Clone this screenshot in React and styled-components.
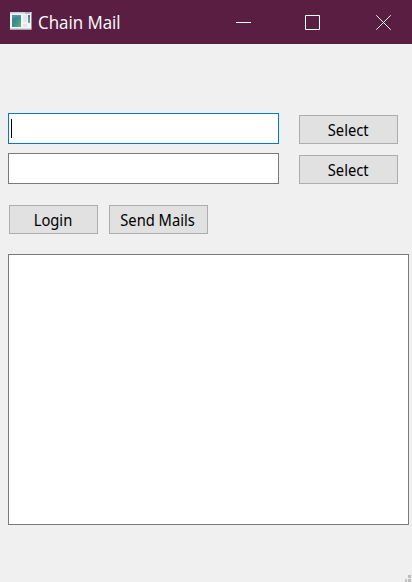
import React from "react";
import styled, { createGlobalStyle } from "styled-components";

const GlobalStyle = createGlobalStyle`
  * { box-sizing: border-box; }
  body { margin: 0; background: #f0f0f0; overflow: hidden; }
`;

const Window = styled.main`
  width: 412px;
  height: 582px;
  display: flex;
  flex-direction: column;
  background: #f0f0f0;
  font-family: "Noto Sans", "Open Sans", sans-serif;
  color: #000;
`;

const TitleBar = styled.header`
  height: 44px;
  flex: none;
  display: flex;
  align-items: center;
  padding: 0 21px 0 10px;
  background: #591e41;
`;

const Title = styled.h1`
  flex: 1;
  margin: 0 0 0 6px;
  color: #fff;
  font: 400 18px/24px "Open Sans", sans-serif;
  transform: scaleX(0.94);
  transform-origin: left center;
  white-space: nowrap;
`;

const Controls = styled.div`
  display: flex;
  align-items: center;
`;

const ControlIcon = styled.svg`
  display: block;
  width: 15px;
  height: 15px;
  margin-left: ${({ $gap }) => $gap}px;
  fill: none;
  stroke: #fff;
`;

const Content = styled.div`
  flex: 1;
  display: flex;
  flex-direction: column;
  padding: 69px 3px 0 8px;
`;

const Fields = styled.div`
  display: grid;
  row-gap: 9px;
`;

const FieldRow = styled.div`
  display: grid;
  grid-template-columns: 271px 99px;
  column-gap: 20px;
  align-items: end;
`;

const Field = styled.div`
  height: 31px;
  padding: 5px 2px;
  border: 1px solid ${({ $focused }) => ($focused ? "#0078d7" : "#7a7a7a")};
  background: #fff;
`;

const Caret = styled.div`
  width: 1px;
  height: 19px;
  background: #000;
`;

const ButtonFrame = styled.button`
  width: ${({ $width }) => $width}px;
  height: 29px;
  padding: 1px 1px 0 0;
  display: flex;
  align-items: center;
  justify-content: center;
  border: 1px solid #adadad;
  border-radius: 0;
  background: #e1e1e1;
  color: #000;
  font: 400 16px/22px "Noto Sans", sans-serif;
`;

const ButtonLabel = styled.span`
  display: block;
  flex: none;
  white-space: nowrap;
  transform: scaleX(0.92);
`;

const Button = ({ width, children }) => (
  <ButtonFrame type="button" $width={width}>
    <ButtonLabel>{children}</ButtonLabel>
  </ButtonFrame>
);

const Actions = styled.div`
  display: flex;
  gap: 11px;
  margin: 21px 0 20px 1px;
`;

const Log = styled.div`
  height: 271px;
  border: 1px solid #7a7a7a;
  background: #fff;
`;

const GripBar = styled.footer`
  display: flex;
  justify-content: flex-end;
  height: 7px;
  padding-right: 1px;
`;

const Grip = styled.svg`
  display: block;
`;

const AppIconSvg = styled.svg`
  display: block;
  margin-bottom: 2px;
`;

const AppIcon = () => (
  <AppIconSvg width="22" height="18" viewBox="0 0 22 18">
    <defs>
      <linearGradient id="pane" x1="0" y1="0" x2="1" y2="1">
        <stop offset="0" stopColor="#397aa0" />
        <stop offset="0.55" stopColor="#3f928b" />
        <stop offset="1" stopColor="#62b477" />
      </linearGradient>
      <linearGradient id="side" x1="0" y1="0" x2="0" y2="1">
        <stop offset="0" stopColor="#3e78a8" />
        <stop offset="1" stopColor="#65b587" />
      </linearGradient>
    </defs>
    <path fill="#f3f5f6" d="M0 0h21.5v17.5H0z" />
    <path fill="#c6d0d8" d="M0 0h21.5v1.5H0z" />
    <path fill="#8398ac" d="M15 .5h5v1h-5z" />
    <path fill="url(#pane)" d="M2 3h9v12H2z" />
    <path fill="#6ba7ad" opacity=".55" d="M2 7Q7 3 11 5V3H2z" />
    <path fill="#e4e7e7" d="M13 3h4v7h-4zM13 12h4v3h-4z" />
    <path fill="url(#side)" d="M18 3h2v8h-2z" />
    <path fill="#b8b5b8" d="M0 16.5h21.5v1H0z" />
  </AppIconSvg>
);

export default function App() {
  return (
    <>
      <GlobalStyle />
      <Window>
        <TitleBar>
          <AppIcon />
          <Title>Chain Mail</Title>
          <Controls>
            <ControlIcon $gap={0}><path d="M0 7.5h15" /></ControlIcon>
            <ControlIcon $gap={54}><path d="M.5.5h14v14H.5z" /></ControlIcon>
            <ControlIcon $gap={56}><path d="M.3.3l14.4 14.4M14.7.3L.3 14.7" /></ControlIcon>
          </Controls>
        </TitleBar>
        <Content>
          <Fields>
            <FieldRow>
              <Field $focused><Caret /></Field>
              <Button width={99}>Select</Button>
            </FieldRow>
            <FieldRow>
              <Field />
              <Button width={99}>Select</Button>
            </FieldRow>
          </Fields>
          <Actions>
            <Button width={89}>Login</Button>
            <Button width={99}>Send Mails</Button>
          </Actions>
          <Log />
        </Content>
        <GripBar>
          <Grip width="6" height="7" fill="#bfbfbf" shapeRendering="crispEdges">
            <path d="M3 0h3v3H3zM3 4h3v3H3zM0 4h2v3H0z" />
          </Grip>
        </GripBar>
      </Window>
    </>
  );
}
